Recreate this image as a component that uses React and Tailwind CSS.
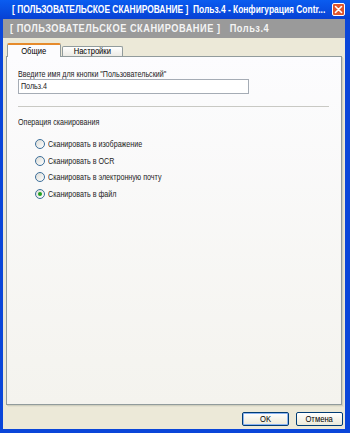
import { useState } from 'react'

const options = [
  'Сканировать в изображение',
  'Сканировать в OCR',
  'Сканировать в электронную почту',
  'Сканировать в файл',
]

// Tahoma is narrower than anything installed, so squeeze the text horizontally
const Narrow = ({ children, className = '' }) => (
  <span className={'inline-block whitespace-nowrap origin-left scale-x-[0.75] ' + className}>{children}</span>
)

const Radio = ({ checked, label, onClick }) => (
  <div className="flex items-center h-[16.5px] cursor-default" onClick={onClick}>
    <span className="w-[10px] h-[10px] rounded-full border border-[#3d6f9a] bg-gradient-to-br from-[#dcdcd6] to-white flex items-center justify-center shrink-0">
      {checked && <span className="w-[4px] h-[4px] rounded-full bg-[#21a121]" />}
    </span>
    <span className="ml-[3px] text-[9.5px] text-[#222]">
      <Narrow>{label}</Narrow>
    </span>
  </div>
)

const XpButton = ({ children, primary }) => (
  <button
    className={
      'w-[47px] h-[14px] rounded-[2px] border border-[#003c74] bg-gradient-to-b from-white to-[#ece9d8] text-[9px] leading-none text-black flex items-center justify-center ' +
      (primary ? 'shadow-[inset_0_0_0_1px_#8cb4f2]' : '')
    }
  >
    <span className="inline-block scale-x-[0.85]">{children}</span>
  </button>
)

export default function App() {
  const [sel, setSel] = useState(3)

  return (
    <div className="w-[350px] h-[433px] bg-[#0a46d9] flex flex-col font-['Liberation_Sans',sans-serif] select-none">
      {/* title bar */}
      <div className="h-[19px] bg-gradient-to-b from-[#0a5cf0] to-[#0841d4] flex items-center pl-[12px] pr-[5px]">
        <div className="flex-1 overflow-hidden text-white font-bold text-[10px]">
          <span className="inline-block whitespace-nowrap origin-left scale-x-[0.84]">
            [ ПОЛЬЗОВАТЕЛЬСКОЕ СКАНИРОВАНИЕ ]&nbsp; Польз.4 - Конфигурация Contr...
          </span>
        </div>
        <span className="w-[13px] h-[13px] rounded-[2px] border border-white bg-[#e0552c] flex items-center justify-center ml-[3px] shrink-0">
          <svg width="9" height="9" viewBox="0 0 9 9">
            <path d="M1.5 1.5 L7.5 7.5 M7.5 1.5 L1.5 7.5" stroke="white" strokeWidth="1.6" strokeLinecap="round" />
          </svg>
        </span>
      </div>

      {/* window body */}
      <div className="flex-1 ml-[3px] mr-[5px] mb-[4px] bg-[#ece9d8] flex flex-col">
        <div className="h-[19px] bg-[#9a9a9a] flex items-center pl-[7px] overflow-hidden">
          <span className="inline-block origin-left scale-x-[0.84] text-[#f4f4f4] font-bold text-[11px] tracking-[0.6px] whitespace-nowrap">
            [ ПОЛЬЗОВАТЕЛЬСКОЕ СКАНИРОВАНИЕ ]&nbsp;&nbsp; Польз.4
          </span>
        </div>

        <div className="px-[3px] pt-[5px] flex flex-col flex-1">
          {/* tabs */}
          <div className="flex items-end h-[14px] pl-[1px] relative z-10 -mb-px">
            <div className="w-[54px] h-[14px] bg-[#fcfcfe] border border-b-0 border-[#919b9c] border-t-2 border-t-[#e68b2c] rounded-t-[2px] flex items-center justify-center text-[9.5px] text-black">
              <span className="inline-block scale-x-[0.8]">Общие</span>
            </div>
            <div className="w-[61px] h-[10px] ml-[1px] mb-px bg-gradient-to-b from-white to-[#ecebe5] border border-b-0 border-[#919b9c] rounded-t-[2px] flex items-center justify-center text-[9.5px] text-black">
              <span className="inline-block scale-x-[0.8]">Настройки</span>
            </div>
          </div>

          {/* tab panel */}
          <div className="h-[349px] border border-[#919b9c] bg-gradient-to-b from-[#fcfcfe] to-[#f4f3ee] shadow-[1px_1px_0_#d0d0bf,2px_2px_0_#e3e0d0] pt-[12px] pl-[11px] pr-[12px]">
            <div className="text-[9.5px] leading-[10px] text-[#222]">
              <Narrow>Введите имя для кнопки "Пользовательский"</Narrow>
            </div>
            <div className="w-[231px] h-[15px] border border-[#a5acb5] bg-white flex items-center pl-[2px] text-[9.5px] text-[#222]">
              <Narrow>Польз.4</Narrow>
            </div>
            <div className="mt-[12px] h-px bg-[#c9c9c4]" />
            <div className="mt-[10px] text-[9.5px] leading-[10px] text-[#222]">
              <Narrow>Операция сканирования</Narrow>
            </div>
            <div className="mt-[9px] pl-[17px] flex flex-col">
              {options.map((o, i) => (
                <Radio key={o} label={o} checked={sel === i} onClick={() => setSel(i)} />
              ))}
            </div>
          </div>

          {/* buttons */}
          <div className="flex justify-end gap-[7px] mt-[7px] -mr-[1px]">
            <XpButton primary>OK</XpButton>
            <XpButton>Отмена</XpButton>
          </div>
        </div>
      </div>
    </div>
  )
}
